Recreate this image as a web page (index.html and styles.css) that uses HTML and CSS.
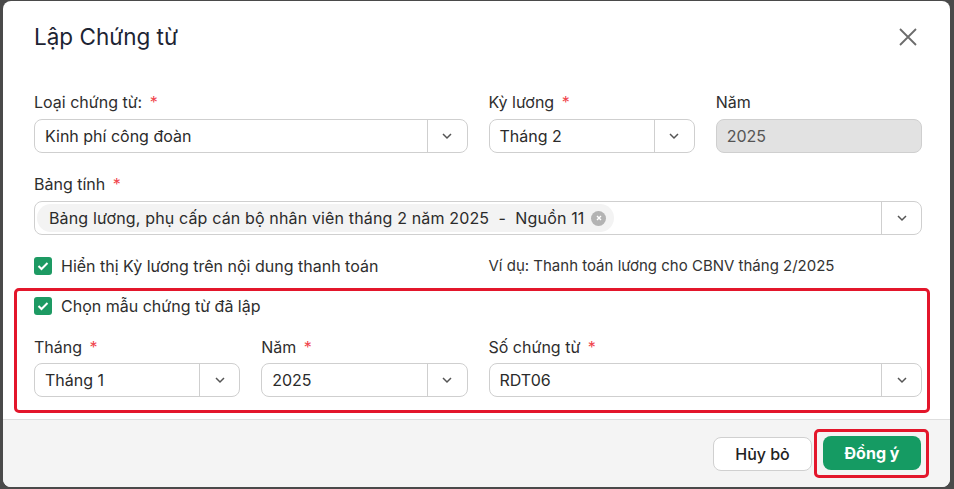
FILE: index.html
```html
<!DOCTYPE html>
<html lang="vi">

<head>
    <meta charset="UTF-8">
    <meta name="viewport" content="width=device-width, initial-scale=1.0">
    <title>Lập Chứng từ</title>
    <link rel="stylesheet" href="styles.css">
</head>

<body>
    <div class="modal">
        <div class="modal_head">
            <h1>Lập Chứng từ</h1>
            <button class="close" aria-label="Đóng">
                <svg width="18" height="18" viewBox="0 0 18 18"><path d="M1 1L17 17M17 1L1 17" stroke="#6b6b6b" stroke-width="1.8" fill="none"/></svg>
            </button>
        </div>

        <div class="modal_body">
            <div class="grid">
                <div class="field span2">
                    <label>Loại chứng từ: <i>*</i></label>
                    <div class="select">
                        <span class="value">Kinh phí công đoàn</span>
                        <span class="arrow"><svg width="12" height="8" viewBox="0 0 12 8"><path d="M2 2L6 6L10 2" stroke="#555" stroke-width="1.5" fill="none"/></svg></span>
                    </div>
                </div>
                <div class="field">
                    <label>Kỳ lương <i>*</i></label>
                    <div class="select">
                        <span class="value">Tháng 2</span>
                        <span class="arrow"><svg width="12" height="8" viewBox="0 0 12 8"><path d="M2 2L6 6L10 2" stroke="#555" stroke-width="1.5" fill="none"/></svg></span>
                    </div>
                </div>
                <div class="field">
                    <label>Năm</label>
                    <div class="select disabled">
                        <span class="value">2025</span>
                    </div>
                </div>
            </div>

            <div class="grid row">
                <div class="field span4">
                    <label>Bảng tính <i>*</i></label>
                    <div class="select">
                        <span class="value tags">
                            <span class="chip">Bảng lương, phụ cấp cán bộ nhân viên tháng 2 năm 2025 &nbsp;-&nbsp; Nguồn 11
                                <span class="chip_x"><svg width="6" height="6" viewBox="0 0 6 6"><path d="M1 1L5 5M5 1L1 5" stroke="#fff" stroke-width="1.4"/></svg></span>
                            </span>
                        </span>
                        <span class="arrow"><svg width="12" height="8" viewBox="0 0 12 8"><path d="M2 2L6 6L10 2" stroke="#555" stroke-width="1.5" fill="none"/></svg></span>
                    </div>
                </div>
            </div>

            <div class="grid row">
                <div class="check span2">
                    <span class="box"><svg width="12" height="10" viewBox="0 0 12 10"><path d="M1.5 5L4.5 8L10.5 2" stroke="#fff" stroke-width="2" fill="none"/></svg></span>
                    Hiển thị Kỳ lương trên nội dung thanh toán
                </div>
                <div class="hint span2">Ví dụ: Thanh toán lương cho CBNV tháng 2/2025</div>
            </div>

            <div class="mark">
                <div class="check">
                    <span class="box"><svg width="12" height="10" viewBox="0 0 12 10"><path d="M1.5 5L4.5 8L10.5 2" stroke="#fff" stroke-width="2" fill="none"/></svg></span>
                    Chọn mẫu chứng từ đã lập
                </div>
                <div class="grid row">
                    <div class="field">
                        <label>Tháng <i>*</i></label>
                        <div class="select">
                            <span class="value">Tháng 1</span>
                            <span class="arrow"><svg width="12" height="8" viewBox="0 0 12 8"><path d="M2 2L6 6L10 2" stroke="#555" stroke-width="1.5" fill="none"/></svg></span>
                        </div>
                    </div>
                    <div class="field">
                        <label>Năm <i>*</i></label>
                        <div class="select">
                            <span class="value">2025</span>
                            <span class="arrow"><svg width="12" height="8" viewBox="0 0 12 8"><path d="M2 2L6 6L10 2" stroke="#555" stroke-width="1.5" fill="none"/></svg></span>
                        </div>
                    </div>
                    <div class="field span2">
                        <label>Số chứng từ <i>*</i></label>
                        <div class="select">
                            <span class="value">RDT06</span>
                            <span class="arrow"><svg width="12" height="8" viewBox="0 0 12 8"><path d="M2 2L6 6L10 2" stroke="#555" stroke-width="1.5" fill="none"/></svg></span>
                        </div>
                    </div>
                </div>
            </div>
        </div>

        <div class="modal_foot">
            <button class="btn btn_cancel">Hủy bỏ</button>
            <span class="mark_btn"><button class="btn btn_ok">Đồng ý</button></span>
        </div>
    </div>
</body>

</html>
```

FILE: styles.css
```css
* {
    margin: 0;
    padding: 0;
    box-sizing: border-box;
}

html,
body {
    height: 100%;
}

body {
    background-color: #4a4a4a;
    font-family: Inter, "Noto Sans", sans-serif;
    color: #2e2e2e;
    padding: 1px 4px 2px 3px;
}

.modal {
    height: 486px;
    background-color: #fff;
    border-radius: 8px;
    overflow: hidden;
    display: flex;
    flex-direction: column;
}

.modal_head {
    display: flex;
    justify-content: space-between;
    align-items: center;
    padding: 21px 33px 0 31px;
}

.modal_head h1 {
    font-size: 22.5px;
    line-height: 30px;
    font-weight: 400;
    color: #1d2433;
}

.close {
    border: 0;
    background: none;
    width: 18px;
    height: 18px;
    display: flex;
    cursor: pointer;
}

.modal_body {
    flex: 1;
    padding: 40px 28px 0 31px;
}

.grid {
    display: grid;
    grid-template-columns: repeat(4, 1fr);
    column-gap: 21px;
}

.row {
    margin-top: 21px;
}

.span2 {
    grid-column: span 2;
}

.span4 {
    grid-column: span 4;
}

.field label {
    display: block;
    font-size: 16px;
    line-height: 20px;
    margin-bottom: 7px;
}

.field label i {
    font-style: normal;
    color: #f0444c;
    margin-left: 3px;
}

.select {
    display: flex;
    height: 34px;
    border: 1px solid #cfcfcf;
    border-radius: 8px;
    font-size: 16px;
    color: #2b2b2b;
}

.select .value {
    flex: 1;
    display: flex;
    align-items: center;
    padding: 0 10px;
}

.select .arrow {
    width: 40px;
    border-left: 1px solid #cfcfcf;
    display: flex;
    align-items: center;
    justify-content: center;
}

.disabled {
    background-color: #e2e2e2;
    color: #555;
}

.tags {
    padding: 0 2px !important;
}

.chip {
    display: flex;
    align-items: center;
    height: 28px;
    padding: 0 8px 0 12px;
    border-radius: 14px;
    background-color: #f3f3f3;
    white-space: nowrap;
    letter-spacing: 0.15px;
}

.chip_x {
    width: 15px;
    height: 15px;
    border-radius: 50%;
    background-color: #b3b3b3;
    display: flex;
    align-items: center;
    justify-content: center;
    margin-left: 7px;
}

.check {
    display: flex;
    align-items: center;
    font-size: 16px;
    line-height: 20px;
}

.box {
    width: 18px;
    height: 18px;
    border-radius: 3px;
    background-color: #1d9a63;
    display: flex;
    align-items: center;
    justify-content: center;
    margin-right: 9px;
}

.hint {
    font-size: 15px;
    line-height: 20px;
    color: #333;
}

.mark {
    margin: 12px -8px 5px -20px;
    border: 3px solid #e3162b;
    border-radius: 5px;
    padding: 5px 5px 13px 17px;
}

.mark .row {
    margin-top: 21px;
}

.mark .field label {
    margin-bottom: 6px;
}

.modal_foot {
    height: 68px;
    border-top: 1px solid #dedede;
    background-color: #f4f4f4;
    display: flex;
    justify-content: flex-end;
    align-items: center;
    padding: 0 21px 0 0;
}

.btn {
    height: 34px;
    border-radius: 8px;
    font-family: Inter, "Noto Sans", sans-serif;
    font-size: 16px;
    cursor: pointer;
}

.btn_cancel {
    width: 99px;
    background-color: #fff;
    border: 1px solid #d0d0d0;
    color: #222;
    font-weight: 500;
    margin-right: 2px;
}

.mark_btn {
    display: flex;
    border: 3px solid #e3162b;
    border-radius: 5px;
    padding: 4px 5px 5px 6px;
}

.btn_ok {
    width: 98px;
    background-color: #159b63;
    border: 0;
    color: #fff;
    font-weight: 700;
}
```
